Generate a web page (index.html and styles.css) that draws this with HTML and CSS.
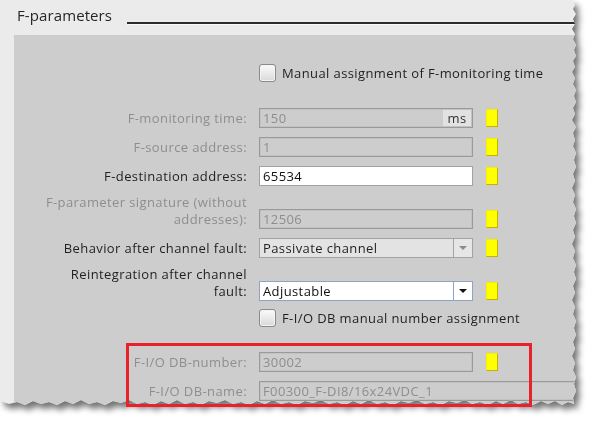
FILE: index.html
```html
<!DOCTYPE html>
<html lang="en">
<head>
<meta charset="utf-8">
<title>F-parameters</title>
<link rel="stylesheet" href="styles.css">
</head>
<body>
<div class="stage">
  <div class="shadow">
    <div class="paper">
      <div class="header">
        <h1 class="title">F-parameters</h1>
        <span class="rule"></span>
      </div>
      <div class="panel">
        <div class="form">
          <label class="check-row gap-after">
            <span class="checkbox"></span>
            <span>Manual assignment of F-monitoring time</span>
          </label>

          <span class="label disabled">F-monitoring time:</span>
          <span class="field disabled"><span class="value">150</span><span class="unit">ms</span></span>
          <span class="flag"></span>

          <span class="label disabled">F-source address:</span>
          <span class="field disabled"><span class="value">1</span></span>
          <span class="flag"></span>

          <span class="label">F-destination address:</span>
          <span class="field active"><span class="value">65534</span></span>
          <span class="flag"></span>

          <span class="label multi disabled">F-parameter signature (without<br>addresses):</span>
          <span class="field disabled"><span class="value">12506</span></span>
          <span class="flag"></span>

          <span class="label">Behavior after channel fault:</span>
          <span class="field select locked"><span class="value">Passivate channel</span><span class="arrow"></span></span>
          <span class="flag"></span>

          <span class="label multi">Reintegration after channel<br>fault:</span>
          <span class="field select open"><span class="value">Adjustable</span><span class="arrow"></span></span>
          <span class="flag"></span>

          <label class="check-row gap-after short">
            <span class="checkbox"></span>
            <span>F-I/O DB manual number assignment</span>
          </label>

          <span class="label disabled">F-I/O DB-number:</span>
          <span class="field disabled"><span class="value">30002</span></span>
          <span class="flag"></span>

          <span class="label disabled">F-I/O DB-name:</span>
          <span class="field disabled wide"><span class="value">F00300_F-DI8/16x24VDC_1</span></span>
        </div>
      </div>
    </div>
  </div>
  <div class="highlight"></div>
</div>
</body>
</html>
```

FILE: styles.css
```css
* { box-sizing: border-box; }

html, body {
  margin: 0;
  padding: 0;
  background: #ffffff;
}

body {
  font-family: "Open Sans", "Noto Sans", "DejaVu Sans", sans-serif;
  font-size: 13px;
  letter-spacing: 0.4px;
  color: #1f1f1f;
}

.stage {
  position: relative;
  width: 602px;
  height: 434px;
  overflow: hidden;
}

.shadow {
  width: 580px;
  height: 410px;
  filter: drop-shadow(4px 5px 3px rgba(0, 0, 0, 0.55));
}

.paper {
  width: 580px;
  height: 410px;
  background: #ebebeb;
  overflow: hidden;
  clip-path: polygon(
    0 0, 573px 0, 575px 5px, 573px 9px, 576px 14px, 573px 19px, 575px 24px,
    572px 29px, 575px 34px, 573px 39px, 576px 45px, 574px 50px, 576px 56px,
    573px 61px, 575px 67px, 572px 72px, 575px 78px, 573px 84px, 576px 90px,
    574px 96px, 576px 102px, 573px 108px, 575px 114px, 572px 120px, 576px 127px,
    573px 133px, 575px 140px, 573px 146px, 576px 153px, 574px 160px, 576px 167px,
    573px 174px, 575px 181px, 572px 188px, 575px 195px, 573px 202px, 576px 209px,
    574px 216px, 576px 223px, 573px 230px, 575px 237px, 572px 244px, 575px 251px,
    573px 258px, 576px 265px, 574px 272px, 576px 279px, 573px 286px, 575px 293px,
    572px 300px, 575px 307px, 573px 314px, 576px 321px, 574px 328px, 576px 335px,
    573px 342px, 575px 349px, 572px 356px, 575px 363px, 573px 370px, 576px 377px,
    574px 384px, 576px 391px, 573px 398px, 574px 404px,
    568px 402px, 562px 405px, 555px 401px, 548px 404px, 541px 401px, 533px 405px,
    526px 402px, 518px 404px, 511px 400px, 503px 404px, 496px 401px, 488px 405px,
    480px 402px, 472px 404px, 465px 400px, 457px 403px, 449px 401px, 441px 405px,
    433px 402px, 425px 404px, 417px 400px, 409px 403px, 401px 401px, 393px 405px,
    385px 402px, 377px 404px, 369px 400px, 361px 404px, 353px 401px, 345px 405px,
    337px 402px, 329px 404px, 321px 400px, 313px 403px, 305px 401px, 297px 405px,
    289px 402px, 281px 404px, 273px 400px, 265px 404px, 257px 401px, 249px 405px,
    241px 402px, 233px 404px, 225px 400px, 217px 403px, 209px 401px, 201px 405px,
    193px 402px, 185px 404px, 177px 400px, 169px 404px, 161px 401px, 153px 405px,
    145px 402px, 137px 404px, 129px 400px, 121px 403px, 113px 401px, 105px 405px,
    97px 402px, 89px 404px, 81px 400px, 73px 404px, 65px 401px, 57px 405px,
    49px 402px, 41px 404px, 33px 401px, 25px 405px, 17px 402px, 9px 404px,
    0 401px
  );
}

.header {
  display: flex;
  align-items: flex-start;
  height: 35px;
  padding-left: 17px;
}

.title {
  margin: 0;
  padding-top: 5px;
  font-size: 15px;
  font-weight: normal;
  line-height: 20px;
  letter-spacing: 0.1px;
  color: #262626;
}

.rule {
  flex: 1;
  margin-left: 15px;
  margin-top: 22px;
  height: 2px;
  background: #2b2b2b;
  border-bottom: 1px solid #f8f8f8;
  box-sizing: content-box;
}

.panel {
  margin-left: 14px;
  height: 380px;
  background: #cdcdcd;
  padding: 29px 0 0 10px;
}

.form {
  display: grid;
  grid-template-columns: 223px 214px 12px;
  column-gap: 12px;
  row-gap: 9px;
  align-items: end;
}

.form > .flag { margin-left: 1px; }

.label {
  text-align: right;
  line-height: 17px;
  color: #1f1f1f;
  padding-bottom: 1px;
  white-space: nowrap;
}

.label.multi { margin-top: -1px; }

.label.disabled { color: #8e8e8e; }

.check-row {
  grid-column: 2 / 4;
  display: flex;
  align-items: center;
  gap: 6px;
  height: 18px;
  white-space: nowrap;
  color: #1f1f1f;
}

.gap-after { margin-bottom: 17px; }
.gap-after.short { margin-top: -1px; margin-bottom: 16px; }

.checkbox {
  width: 17px;
  height: 18px;
  border: 1px solid #8a8a8a;
  border-radius: 3px;
  background: linear-gradient(#fbfbfb, #d9d9d9);
  box-shadow: inset 0 0 0 1px #f4f4f4;
  flex: none;
}

.field {
  display: flex;
  align-items: stretch;
  height: 20px;
  border: 1px solid #9a9a9a;
  box-shadow: inset 0 0 0 1px #c2c2c2;
  line-height: 18px;
  white-space: nowrap;
  overflow: hidden;
}

.field .value {
  flex: 1;
  padding-left: 3px;
}

.field.disabled {
  background: #cdcdcd;
  color: #8e8e8e;
}

.field.active {
  background: #ffffff;
  color: #111111;
  box-shadow: none;
  border-color: #a3a3a3;
}

.field .unit {
  width: 28px;
  margin: 1px;
  background: #e2e2e2;
  color: #333333;
  text-align: center;
  line-height: 16px;
}

.field.wide {
  width: 330px;
}

.field.select.locked {
  background: #e3e3e3;
  color: #1f1f1f;
  box-shadow: none;
  border-color: #a3a3a3;
}

.field.select.open {
  background: #ffffff;
  color: #111111;
  box-shadow: none;
  border-color: #8fa3c4;
}

.arrow {
  width: 19px;
  flex: none;
  display: flex;
  align-items: center;
  justify-content: center;
  border-left: 1px solid #a3a3a3;
  background: #e6e6e6;
}

.arrow::before {
  content: "";
  border-left: 4px solid transparent;
  border-right: 4px solid transparent;
  border-top: 4px solid #8a8a8a;
}

.open .arrow {
  background: #ffffff;
  border-left-color: #8fa3c4;
}

.open .arrow::before {
  border-top-color: #111111;
}

.flag {
  align-self: end;
  margin-bottom: 1px;
  width: 12px;
  height: 18px;
  background: #ffff00;
  border: 1px solid;
  border-color: #f2f000 #c4b000 #c4b000 #f2f000;
}

.highlight {
  position: absolute;
  left: 126px;
  top: 343px;
  width: 406px;
  height: 64px;
  border: 3px solid #e8212b;
}
```
